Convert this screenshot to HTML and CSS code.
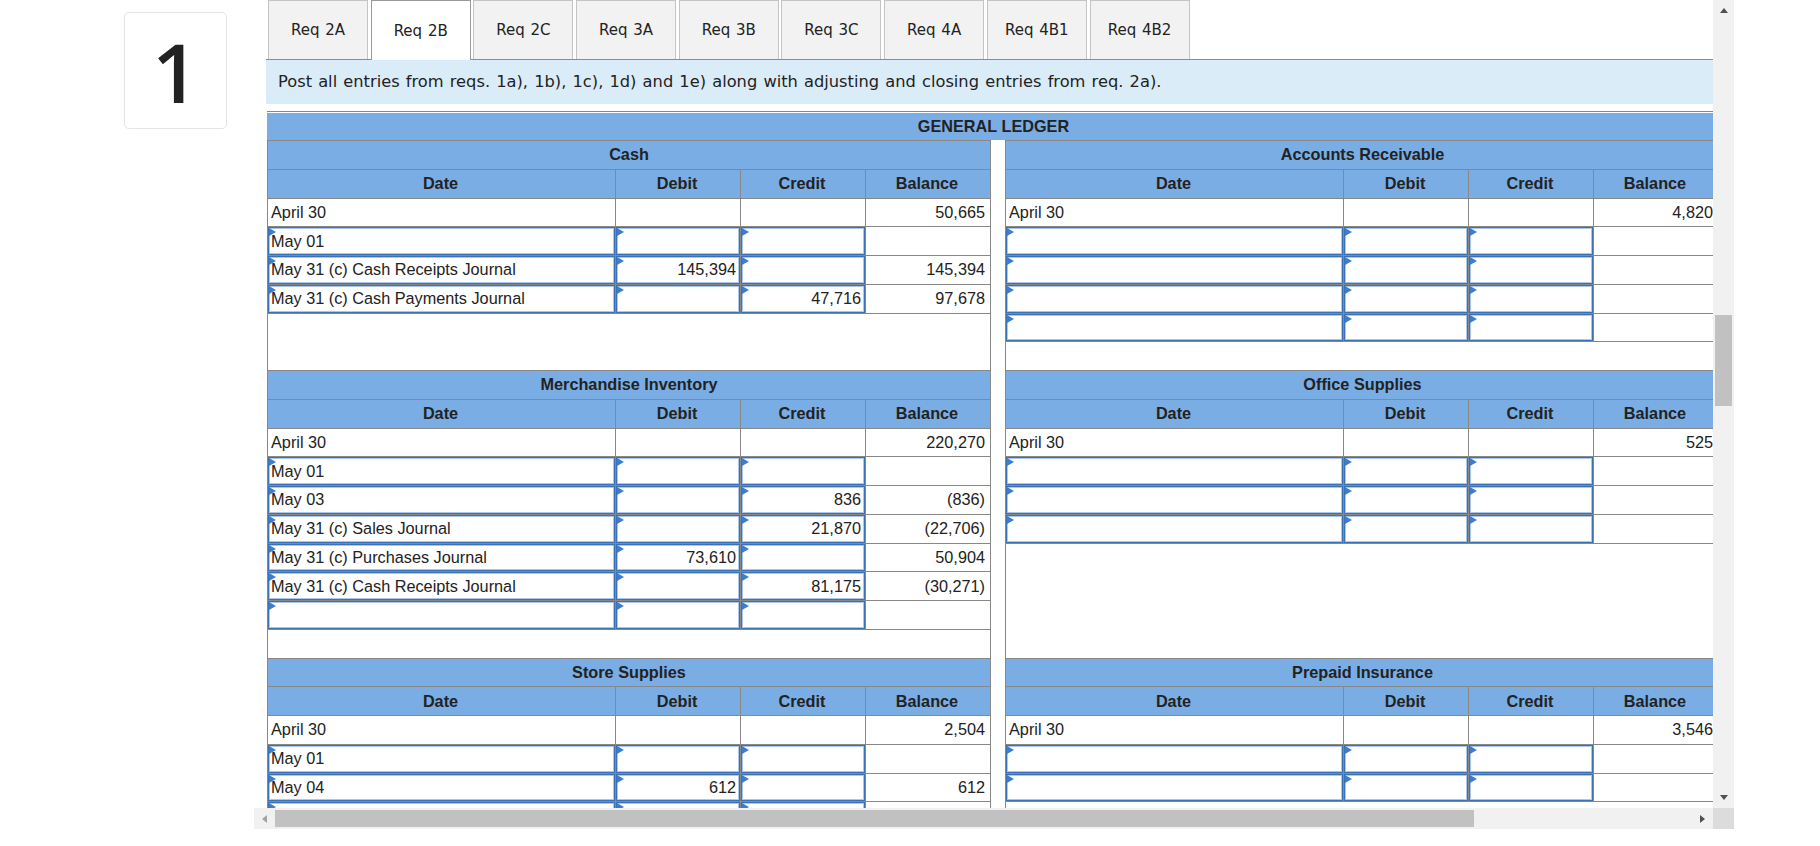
FILE: index.html
```html
<!DOCTYPE html>
<html>
<head>
<meta charset="utf-8">
<link rel="stylesheet" href="styles.css">
</head>
<body>
<div class="page">
  <div class="qcol"><div class="qnum">1</div></div>
  <div class="scroller">
    <div class="viewport">
      <div class="content">
        <div class="tabs">
          <div class="tab">Req 2A</div>
          <div class="tab active">Req 2B</div>
          <div class="tab">Req 2C</div>
          <div class="tab">Req 3A</div>
          <div class="tab">Req 3B</div>
          <div class="tab">Req 3C</div>
          <div class="tab">Req 4A</div>
          <div class="tab">Req 4B1</div>
          <div class="tab">Req 4B2</div>
        </div>
        <div class="instr">Post all entries from reqs. 1a), 1b), 1c), 1d) and 1e) along with adjusting and closing entries from req. 2a).</div>
        <div class="ledger">
          <div class="gl-title">GENERAL LEDGER</div>
          <div class="gl-grid">

            <div class="cell left">
              <div class="acct">
                <div class="a-title">Cash</div>
                <div class="row hdr"><div class="c">Date</div><div class="c">Debit</div><div class="c">Credit</div><div class="c">Balance</div></div>
                <div class="row"><div class="c">April 30</div><div class="c"></div><div class="c"></div><div class="c n">50,665</div></div>
                <div class="row"><div class="c in"><div class="box">May 01</div></div><div class="c in"><div class="box n"></div></div><div class="c in"><div class="box n"></div></div><div class="c n"></div></div>
                <div class="row"><div class="c in"><div class="box">May 31 (c) Cash Receipts Journal</div></div><div class="c in"><div class="box n">145,394</div></div><div class="c in"><div class="box n"></div></div><div class="c n">145,394</div></div>
                <div class="row"><div class="c in"><div class="box">May 31 (c) Cash Payments Journal</div></div><div class="c in"><div class="box n"></div></div><div class="c in"><div class="box n">47,716</div></div><div class="c n">97,678</div></div>
              </div>
            </div>

            <div class="cell right">
              <div class="acct">
                <div class="a-title">Accounts Receivable</div>
                <div class="row hdr"><div class="c">Date</div><div class="c">Debit</div><div class="c">Credit</div><div class="c">Balance</div></div>
                <div class="row"><div class="c">April 30</div><div class="c"></div><div class="c"></div><div class="c n">4,820</div></div>
                <div class="row"><div class="c in"><div class="box"></div></div><div class="c in"><div class="box n"></div></div><div class="c in"><div class="box n"></div></div><div class="c n"></div></div>
                <div class="row"><div class="c in"><div class="box"></div></div><div class="c in"><div class="box n"></div></div><div class="c in"><div class="box n"></div></div><div class="c n"></div></div>
                <div class="row"><div class="c in"><div class="box"></div></div><div class="c in"><div class="box n"></div></div><div class="c in"><div class="box n"></div></div><div class="c n"></div></div>
                <div class="row"><div class="c in"><div class="box"></div></div><div class="c in"><div class="box n"></div></div><div class="c in"><div class="box n"></div></div><div class="c n"></div></div>
              </div>
            </div>

            <div class="cell left">
              <div class="acct">
                <div class="a-title">Merchandise Inventory</div>
                <div class="row hdr"><div class="c">Date</div><div class="c">Debit</div><div class="c">Credit</div><div class="c">Balance</div></div>
                <div class="row"><div class="c">April 30</div><div class="c"></div><div class="c"></div><div class="c n">220,270</div></div>
                <div class="row"><div class="c in"><div class="box">May 01</div></div><div class="c in"><div class="box n"></div></div><div class="c in"><div class="box n"></div></div><div class="c n"></div></div>
                <div class="row"><div class="c in"><div class="box">May 03</div></div><div class="c in"><div class="box n"></div></div><div class="c in"><div class="box n">836</div></div><div class="c n">(836)</div></div>
                <div class="row"><div class="c in"><div class="box">May 31 (c) Sales Journal</div></div><div class="c in"><div class="box n"></div></div><div class="c in"><div class="box n">21,870</div></div><div class="c n">(22,706)</div></div>
                <div class="row"><div class="c in"><div class="box">May 31 (c) Purchases Journal</div></div><div class="c in"><div class="box n">73,610</div></div><div class="c in"><div class="box n"></div></div><div class="c n">50,904</div></div>
                <div class="row"><div class="c in"><div class="box">May 31 (c) Cash Receipts Journal</div></div><div class="c in"><div class="box n"></div></div><div class="c in"><div class="box n">81,175</div></div><div class="c n">(30,271)</div></div>
                <div class="row"><div class="c in"><div class="box"></div></div><div class="c in"><div class="box n"></div></div><div class="c in"><div class="box n"></div></div><div class="c n"></div></div>
              </div>
            </div>

            <div class="cell right">
              <div class="acct">
                <div class="a-title">Office Supplies</div>
                <div class="row hdr"><div class="c">Date</div><div class="c">Debit</div><div class="c">Credit</div><div class="c">Balance</div></div>
                <div class="row"><div class="c">April 30</div><div class="c"></div><div class="c"></div><div class="c n">525</div></div>
                <div class="row"><div class="c in"><div class="box"></div></div><div class="c in"><div class="box n"></div></div><div class="c in"><div class="box n"></div></div><div class="c n"></div></div>
                <div class="row"><div class="c in"><div class="box"></div></div><div class="c in"><div class="box n"></div></div><div class="c in"><div class="box n"></div></div><div class="c n"></div></div>
                <div class="row"><div class="c in"><div class="box"></div></div><div class="c in"><div class="box n"></div></div><div class="c in"><div class="box n"></div></div><div class="c n"></div></div>
              </div>
            </div>

            <div class="cell left">
              <div class="acct">
                <div class="a-title">Store Supplies</div>
                <div class="row hdr"><div class="c">Date</div><div class="c">Debit</div><div class="c">Credit</div><div class="c">Balance</div></div>
                <div class="row"><div class="c">April 30</div><div class="c"></div><div class="c"></div><div class="c n">2,504</div></div>
                <div class="row"><div class="c in"><div class="box">May 01</div></div><div class="c in"><div class="box n"></div></div><div class="c in"><div class="box n"></div></div><div class="c n"></div></div>
                <div class="row"><div class="c in"><div class="box">May 04</div></div><div class="c in"><div class="box n">612</div></div><div class="c in"><div class="box n"></div></div><div class="c n">612</div></div>
                <div class="row"><div class="c in"><div class="box"></div></div><div class="c in"><div class="box n"></div></div><div class="c in"><div class="box n"></div></div><div class="c n"></div></div>
                <div class="row"><div class="c in"><div class="box"></div></div><div class="c in"><div class="box n"></div></div><div class="c in"><div class="box n"></div></div><div class="c n"></div></div>
              </div>
            </div>

            <div class="cell right">
              <div class="acct">
                <div class="a-title">Prepaid Insurance</div>
                <div class="row hdr"><div class="c">Date</div><div class="c">Debit</div><div class="c">Credit</div><div class="c">Balance</div></div>
                <div class="row"><div class="c">April 30</div><div class="c"></div><div class="c"></div><div class="c n">3,546</div></div>
                <div class="row"><div class="c in"><div class="box"></div></div><div class="c in"><div class="box n"></div></div><div class="c in"><div class="box n"></div></div><div class="c n"></div></div>
                <div class="row"><div class="c in"><div class="box"></div></div><div class="c in"><div class="box n"></div></div><div class="c in"><div class="box n"></div></div><div class="c n"></div></div>
              </div>
            </div>

          </div>
        </div>
      </div>
    </div>
    <div class="vbar">
      <div class="btn"><span class="arr up"></span></div>
      <div class="vtrack"><div class="vthumb"></div></div>
      <div class="btn"><span class="arr down"></span></div>
    </div>
    <div class="hbar">
      <div class="btn"><span class="arr left"></span></div>
      <div class="htrack"><div class="hthumb"></div></div>
      <div class="btn"><span class="arr rightarr"></span></div>
    </div>
    <div class="corner"></div>
  </div>
</div>
</body>
</html>
```

FILE: styles.css
```css
html, body {
  margin: 0;
  padding: 0;
  background: #fff;
}
body {
  font-family: "Liberation Sans", Arial, sans-serif;
  color: #222;
}
.page {
  display: flex;
  width: 1820px;
  height: 846px;
}
.qcol {
  width: 254px;
  flex: none;
}
.qnum {
  margin: 12px 0 0 124px;
  width: 103px;
  height: 117px;
  box-sizing: border-box;
  border: 1px solid #e4e4e4;
  border-radius: 5px;
  display: flex;
  align-items: center;
  justify-content: center;
  font-family: "Open Sans", "Noto Sans", sans-serif;
  font-size: 82px;
  font-weight: 600;
  line-height: 1;
  color: #222;
}
.scroller {
  flex: none;
  display: grid;
  grid-template-columns: 1459px 21px;
  grid-template-rows: 808px 21px;
}
.viewport {
  overflow: hidden;
}
.content {
  width: 1800px;
  padding-left: 12px;
}
.tabs {
  display: flex;
  height: 60px;
  box-sizing: border-box;
  border-bottom: 1px solid #8c8c8c;
  padding-left: 2px;
}
.tab {
  width: 100px;
  height: 59px;
  box-sizing: border-box;
  margin-right: 2.7px;
  border: 1px solid #c4c4c4;
  border-bottom: none;
  background: #f2f2f2;
  display: flex;
  align-items: center;
  justify-content: center;
  font-family: "DejaVu Sans", Verdana, sans-serif;
  font-size: 15px;
  word-spacing: 1px;
  color: #222;
}
.tab.active {
  background: #fff;
  border-color: #9a9a9a;
  height: 60px;
  margin-bottom: -1px;
}
.instr {
  height: 44px;
  line-height: 44px;
  background: #dbecf9;
  padding-left: 12px;
  font-family: "DejaVu Sans", Verdana, sans-serif;
  font-size: 16.25px;
  word-spacing: 1px;
  color: #222;
  white-space: nowrap;
}
.ledger {
  margin-top: 7px;
  width: 1453px;
  border-top: 1px solid #888;
  padding-top: 1px;
  margin-left: 1px;
}
.gl-title {
  height: 27px;
  line-height: 27px;
  background: #7aade4;
  text-align: center;
  font-weight: bold;
  font-size: 16.25px;
  color: #222;
}
.gl-grid {
  display: grid;
  grid-template-columns: 724px 715px;
  column-gap: 14px;
}
.cell {
  box-sizing: border-box;
  border-left: 1px solid #888;
  border-right: 1px solid #888;
  padding-bottom: 27.75px;
}
.acct {
  border-top: 1px solid #888;
}
.a-title {
  height: 28.75px;
  box-sizing: border-box;
  border-bottom: 1px solid #888;
  background: #7aade4;
  display: flex;
  align-items: center;
  justify-content: center;
  font-weight: bold;
  font-size: 16.25px;
  color: #222;
}
.row {
  display: grid;
  height: 28.75px;
  box-sizing: border-box;
  border-bottom: 1px solid #888;
  font-size: 16.25px;
}
.left .row {
  grid-template-columns: 348px 125px 125px 124px;
}
.right .row {
  grid-template-columns: 338px 125px 125px 125px;
}
.c {
  box-sizing: border-box;
  border-right: 1px solid #888;
  display: flex;
  align-items: center;
  padding: 0 5px 0 3px;
  white-space: nowrap;
  overflow: hidden;
}
.left .row .c:last-child {
  border-right: none;
}
.c.n {
  justify-content: flex-end;
}
.row.hdr {
  background: #7aade4;
  font-weight: bold;
}
.row.hdr .c {
  justify-content: center;
}
.c.in {
  padding: 0;
}
.box {
  position: relative;
  flex: 1;
  height: 100%;
  box-sizing: border-box;
  border: 1px solid #3d71b6;
  box-shadow: inset 0 0 0 1px #a9c8ee;
  display: flex;
  align-items: center;
  padding: 0 3px 0 2px;
  background: #fff;
}
.box.n {
  justify-content: flex-end;
}
.box::before {
  content: "";
  position: absolute;
  left: 0;
  top: 0;
  border-left: 7px solid #3c7dd0;
  border-top: 4px solid transparent;
  border-bottom: 4px solid transparent;
}
.vbar {
  background: #f1f1f1;
  display: flex;
  flex-direction: column;
}
.hbar {
  background: #f1f1f1;
  display: flex;
}
.corner {
  background: #dcdcdc;
}
.btn {
  width: 21px;
  height: 21px;
  flex: none;
  display: flex;
  align-items: center;
  justify-content: center;
}
.vtrack {
  flex: 1;
}
.vthumb {
  margin: 294px 2px 0 2px;
  height: 91px;
  background: #c1c1c1;
}
.htrack {
  flex: 1;
  padding: 2px 0;
  box-sizing: border-box;
}
.hthumb {
  width: 1199px;
  height: 17px;
  background: #c1c1c1;
}
.arr {
  width: 0;
  height: 0;
}
.arr.up {
  border-left: 4.5px solid transparent;
  border-right: 4.5px solid transparent;
  border-bottom: 5px solid #505050;
}
.arr.down {
  border-left: 4.5px solid transparent;
  border-right: 4.5px solid transparent;
  border-top: 5px solid #505050;
}
.arr.left {
  border-top: 4.5px solid transparent;
  border-bottom: 4.5px solid transparent;
  border-right: 5px solid #a3a3a3;
}
.arr.rightarr {
  border-top: 4.5px solid transparent;
  border-bottom: 4.5px solid transparent;
  border-left: 5px solid #505050;
}
```
